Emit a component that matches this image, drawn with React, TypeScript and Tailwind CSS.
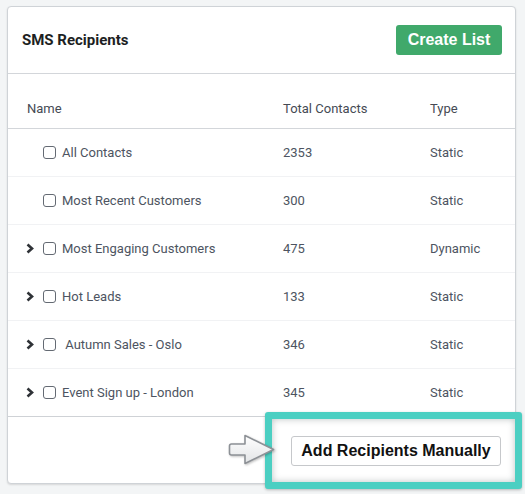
import React from 'react';

interface RecipientList {
    name: string;
    total: number;
    type: 'Static' | 'Dynamic';
    expandable: boolean;
}

const lists: RecipientList[] = [
    { name: 'All Contacts', total: 2353, type: 'Static', expandable: false },
    { name: 'Most Recent Customers', total: 300, type: 'Static', expandable: false },
    { name: 'Most Engaging Customers', total: 475, type: 'Dynamic', expandable: true },
    { name: 'Hot Leads', total: 133, type: 'Static', expandable: true },
    { name: '\u00a0Autumn Sales - Oslo', total: 346, type: 'Static', expandable: true },
    { name: 'Event Sign up - London', total: 345, type: 'Static', expandable: true },
];

function Chevron() {
    return (
        <svg width="8" height="11" viewBox="0 0 8 11" className="block">
            <polyline points="1.5,1.5 6,5.5 1.5,9.5" fill="none" stroke="#2f3237" strokeWidth="2.6" strokeLinejoin="miter" />
        </svg>
    );
}

function PointerArrow() {
    return (
        <svg width="47" height="31" viewBox="0 0 47 31" className="block drop-shadow-[1px_1px_1px_rgba(0,0,0,0.25)]">
            <defs>
                <linearGradient id="arrowFill" x1="0" y1="0" x2="0" y2="1">
                    <stop offset="0" stopColor="#ffffff" />
                    <stop offset="1" stopColor="#e2e4e6" />
                </linearGradient>
            </defs>
            <path
                d="M3.5 10 H17 V1.5 L45.5 15.5 L17 29.5 V21 H3.5 Q1.5 21 1.5 19 V12 Q1.5 10 3.5 10 Z"
                fill="url(#arrowFill)"
                stroke="#8d9196"
                strokeWidth="1.6"
                strokeLinejoin="round"
            />
        </svg>
    );
}

export default function App() {
    return (
        <div className="min-h-screen bg-[#f3f5f6] pt-[6px] pl-[7px] font-['Roboto',sans-serif]">
            <div className="w-[509px] rounded-[4px] border border-[#cfd3d7] bg-white shadow-[0_1px_2px_rgba(0,0,0,0.12)]">
                {/* header */}
                <div className="flex h-[67px] items-center justify-between border-b border-[#d3d6da] pl-[14px] pr-[13px]">
                    <h2 className="text-[15px] font-bold text-[#1d1f23]">SMS Recipients</h2>
                    <button className="h-[30px] w-[106px] rounded-[3px] bg-[#40a96b] font-['Liberation_Sans',sans-serif] text-[16px] font-bold text-white">
                        Create List
                    </button>
                </div>

                {/* table */}
                <div className="text-[13px] text-[#4d5461]">
                    <div className="grid h-[55px] grid-cols-[256px_147px_1fr] items-end border-b border-[#d3d6da] pb-[9px] pl-[19px] leading-[20px] text-[#454a54]">
                        <span>Name</span>
                        <span>Total Contacts</span>
                        <span>Type</span>
                    </div>
                    {lists.map((list, i) => (
                        <div
                            key={list.name}
                            className={
                                'grid h-[48px] grid-cols-[256px_147px_1fr] items-center pl-[18px] ' +
                                (i === lists.length - 1 ? 'border-b border-[#cfd2d6]' : 'border-b border-[#f1f2f4]')
                            }
                        >
                            <div className="flex items-center">
                                <span className="flex w-[17px] justify-start">{list.expandable && <Chevron />}</span>
                                <span className="h-[13px] w-[13px] rounded-[3px] border border-[#646a73] bg-white" />
                                <span className="ml-[6px] whitespace-pre">{list.name}</span>
                            </div>
                            <span className="pl-px">{list.total}</span>
                            <span className="pl-px">{list.type}</span>
                        </div>
                    ))}
                </div>

                {/* footer with highlighted manual add action */}
                <div className="relative h-[66px]">
                    <div className="absolute right-[-7px] top-[-5px] h-[77px] w-[257px] rounded-[3px] border-[7px] border-[#4bcfc2] bg-white shadow-[0_1px_3px_rgba(0,0,0,0.25)]">
                        <div className="flex h-full items-center pl-[19px] shadow-[inset_0_0_7px_rgba(60,80,80,0.35)]">
                            <button className="h-[30px] w-[210px] rounded-[3px] border border-[#c6c8cb] bg-white font-['Liberation_Sans',sans-serif] text-[16px] font-bold text-[#111]">
                                Add Recipients Manually
                            </button>
                        </div>
                        <div className="absolute left-[-44px] top-[15px]">
                            <PointerArrow />
                        </div>
                    </div>
                </div>
            </div>
        </div>
    );
}
